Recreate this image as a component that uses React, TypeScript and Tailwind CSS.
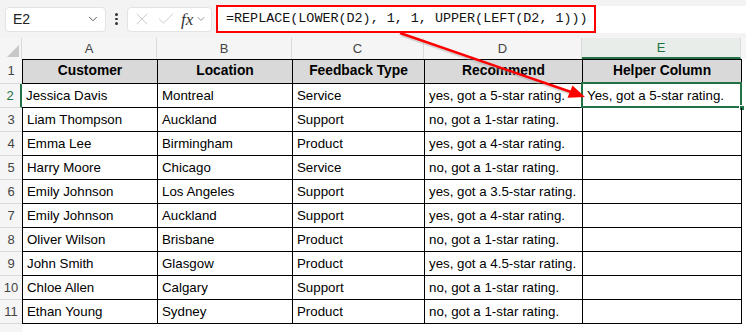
import { ChevronDown, X, Check } from 'lucide-react';

const rows = [
  ['Jessica Davis', 'Montreal', 'Service', 'yes, got a 5-star rating.', 'Yes, got a 5-star rating.'],
  ['Liam Thompson', 'Auckland', 'Support', 'no, got a 1-star rating.', ''],
  ['Emma Lee', 'Birmingham', 'Product', 'yes, got a 4-star rating.', ''],
  ['Harry Moore', 'Chicago', 'Service', 'no, got a 1-star rating.', ''],
  ['Emily Johnson', 'Los Angeles', 'Support', 'yes, got a 3.5-star rating.', ''],
  ['Emily Johnson', 'Auckland', 'Support', 'yes, got a 4-star rating.', ''],
  ['Oliver Wilson', 'Brisbane', 'Product', 'no, got a 1-star rating.', ''],
  ['John Smith', 'Glasgow', 'Product', 'yes, got a 4.5-star rating.', ''],
  ['Chloe Allen', 'Calgary', 'Support', 'no, got a 1-star rating.', ''],
  ['Ethan Young', 'Sydney', 'Product', 'no, got a 1-star rating.', ''],
];

const heads = ['Customer', 'Location', 'Feedback Type', 'Recommend', 'Helper Column'];
const widths = ['w-[136px] border-l', 'w-[135px]', 'w-[132px]', 'w-[158px]', 'w-[159px]'];
const letters = ['A', 'B', 'C', 'D', 'E'];

export default function App() {
  return (
    <div className="relative h-[332px] w-[746px] overflow-hidden bg-white font-['Liberation_Sans',sans-serif] text-black">
      {/* toolbar */}
      <div className="flex h-[38px] items-center bg-[#f3f3f3] pl-[5px]">
        <div className="flex h-[25px] w-[101px] items-center justify-between rounded-[4px] border border-[#e3e3e3] bg-white pl-[7px] pr-[5px] text-[14px] text-[#222]">
          <span>E2</span>
          <ChevronDown className="size-[14px] text-[#444]" strokeWidth={1.5} />
        </div>
        <div className="flex w-[21px] flex-col items-center gap-[2px]">
          <span className="size-[2.5px] rounded-full bg-[#333]" />
          <span className="size-[2.5px] rounded-full bg-[#333]" />
          <span className="size-[2.5px] rounded-full bg-[#333]" />
        </div>
        <div className="flex h-[25px] w-[85px] items-center rounded-[4px] border border-[#e3e3e3] bg-white pl-[4px] text-[#c0c0c0]">
          <X className="size-[20px]" strokeWidth={1} />
          <Check className="ml-[4px] size-[20px]" strokeWidth={1} />
          <span className="ml-[5px] font-['Liberation_Serif',serif] text-[17px] italic leading-none text-[#333]">fx</span>
          <ChevronDown className="ml-[2px] size-[12px] text-[#777]" strokeWidth={1.5} />
        </div>
        <div className="ml-[4px] flex h-[27px] flex-1 items-center bg-white">
          <div className="flex h-[28px] w-[380px] items-center border-[2.5px] border-[#ff0000] pl-[8px] font-['Liberation_Mono',monospace] text-[13.4px] text-[#111]">
            =REPLACE(LOWER(D2), 1, 1, UPPER(LEFT(D2, 1)))
          </div>
        </div>
      </div>

      {/* column letters */}
      <div className="flex h-[21px] bg-[#f5f5f5] text-[13px] text-[#444]">
        <div className="relative w-[22px] border-r border-[#dadada]">
          <div className="absolute bottom-[2px] right-[2px] h-0 w-0 border-b-[12px] border-l-[12px] border-b-[#c8c8c8] border-l-transparent" />
        </div>
        {letters.map((l, i) => (
          <div
            key={l}
            className={
              (i === 0 ? 'w-[135px] ' : widths[i].split(' ')[0] + ' ') +
              'flex items-center justify-center border-r border-[#dadada] ' +
              (l === 'E' ? 'border-b-2 border-b-[#217346] bg-[#e8ede9] text-[#217346]' : '')
            }
          >
            {l}
          </div>
        ))}
      </div>

      {/* header row */}
      <div className="flex h-[25px]">
        <div className="flex w-[22px] items-end justify-center border-b border-[#dadada] bg-[#f5f5f5] pb-[3px] text-[13px] text-[#444]">1</div>
        {heads.map((h, i) => (
          <div
            key={h}
            className={`${widths[i]} flex items-center justify-center border-y border-r border-black bg-[#d9d9d9] text-[13.8px] font-bold`}
          >
            {h}
          </div>
        ))}
      </div>

      {/* data rows */}
      {rows.map((r, ri) => (
        <div key={ri} className="flex h-[24px]">
          <div
            className={
              'flex w-[22px] items-end justify-center border-b border-[#dadada] bg-[#f5f5f5] pb-[2px] text-[13px] ' +
              (ri === 0 ? 'border-r-2 border-r-[#217346] text-[#217346]' : 'text-[#444]')
            }
          >
            {ri + 2}
          </div>
          {r.map((c, ci) => (
            <div
              key={ci}
              className={`${widths[ci]} ${ri === 0 && ci === 0 ? 'border-l-0' : ''} relative flex items-center border-b border-r border-black pl-[4px] text-[13.3px]`}
            >
              {c}
              {ri === 0 && ci === 4 && (
                <>
                  <div className="absolute -left-[2px] -top-[2px] h-[26px] w-[161px] border-2 border-[#217346]" />
                  <div className="absolute -bottom-[4px] -right-[4px] size-[6px] border border-white bg-[#217346]" />
                </>
              )}
            </div>
          ))}
        </div>
      ))}

      <div className="flex h-[10px]">
        <div className="w-[22px] bg-[#f5f5f5]" />
      </div>

      {/* arrow */}
      <svg className="pointer-events-none absolute left-0 top-0" width="746" height="332">
        <line x1="400" y1="33" x2="571" y2="92" stroke="#999" strokeOpacity="0.35" strokeWidth="3" transform="translate(1 2)" />
        <line x1="400" y1="33" x2="571" y2="92" stroke="#ff0000" strokeWidth="2.5" />
        <polygon points="585,97 567.5,97.8 572.5,85.5" fill="#ff0000" />
      </svg>
    </div>
  );
}
